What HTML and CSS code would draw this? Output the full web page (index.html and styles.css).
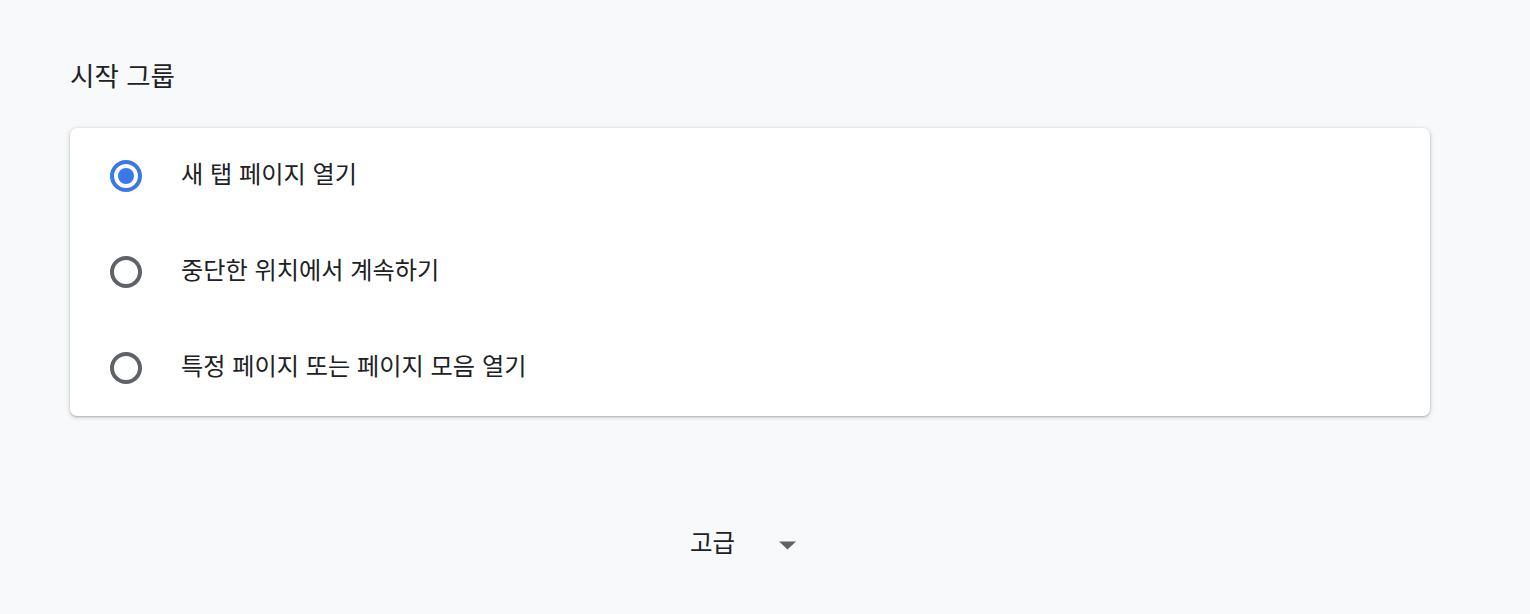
FILE: index.html
```html
<!DOCTYPE html>
<html lang="ko">
<head>
<meta charset="utf-8">
<link rel="stylesheet" href="styles.css">
</head>
<body>
<main class="page">
  <h2 class="section-title">시작 그룹</h2>
  <div class="card">
    <div class="radio-row">
      <span class="radio checked"></span>
      <span class="label">새 탭 페이지 열기</span>
    </div>
    <div class="radio-row">
      <span class="radio"></span>
      <span class="label">중단한 위치에서 계속하기</span>
    </div>
    <div class="radio-row">
      <span class="radio"></span>
      <span class="label">특정 페이지 또는 페이지 모음 열기</span>
    </div>
  </div>
  <div class="advanced">
    <span class="advanced-label">고급</span>
    <svg class="arrow" width="17" height="9" viewBox="0 0 17 9"><path d="M0 0.5 L17 0.5 L8.5 8.5 Z" fill="#5f6368"/></svg>
  </div>
</main>
</body>
</html>
```
FILE: styles.css
```css
html, body {
  margin: 0;
  padding: 0;
  background: #f8f9fa;
}
body {
  font-family: "Noto Sans CJK KR", "Noto Sans", sans-serif;
  color: #202124;
  width: 1530px;
  height: 614px;
  overflow: hidden;
}
.page {
  padding: 56px 100px 0 70px;
  display: flex;
  flex-direction: column;
}
.section-title {
  margin: 0;
  font-size: 26.5px;
  font-weight: 400;
  line-height: 38px;
  height: 38px;
  color: #202124;
}
.card {
  margin-top: 34px;
  width: 1360px;
  background: #fff;
  border-radius: 7px;
  box-shadow: 0 1px 2px rgba(60,64,67,0.3), 0 1px 4px 1px rgba(60,64,67,0.15);
  display: flex;
  flex-direction: column;
}
.radio-row {
  display: flex;
  align-items: center;
  height: 96px;
  padding-left: 40px;
}
.radio {
  box-sizing: border-box;
  width: 32px;
  height: 32px;
  border-radius: 50%;
  border: 4px solid #5f6368;
  display: flex;
  align-items: center;
  justify-content: center;
  flex: none;
}
.radio.checked {
  border-color: #3b78e7;
}
.radio.checked::after {
  content: "";
  width: 16px;
  height: 16px;
  border-radius: 50%;
  background: #3b78e7;
}
.label {
  margin-left: 39px;
  font-size: 24.2px;
  line-height: 30px;
  margin-top: -6px;
}
.advanced {
  margin-top: 110px;
  display: flex;
  align-items: center;
  justify-content: center;
  gap: 44px;
  width: 1346px;
}
.advanced-label {
  font-size: 24.5px;
  line-height: 32px;
}
.arrow {
  flex: none;
  margin-top: 7px;
}
```
